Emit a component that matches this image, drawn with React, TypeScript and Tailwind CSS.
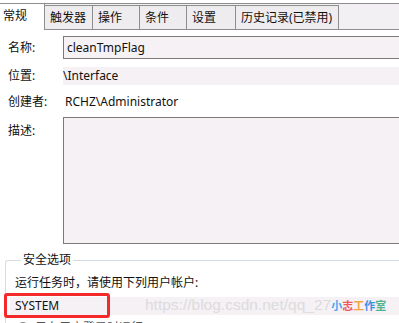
import React from 'react';

const tabs = [
  { label: '触发器', w: 'w-[48px]' },
  { label: '操作', w: 'w-[47px]' },
  { label: '条件', w: 'w-[47px]' },
  { label: '设置', w: 'w-[49px]' },
  { label: '历史记录(已禁用)', w: 'w-[103px]' },
];

export default function App() {
  return (
    <div className="relative w-[399px] h-[323px] overflow-hidden bg-white text-[12px] leading-[18px] text-[#111] font-['Noto_Sans','Noto_Sans_CJK_SC',sans-serif]">
      {/* tab strip */}
      <div className="mt-[3px] flex h-[27px] border-y border-[#8e8e8e] bg-[#f3f0f3]">
        <div className="w-[45px] -mb-px bg-white pl-[3px] pt-[3px] border-r border-[#8e8e8e]">常规</div>
        {tabs.map((t) => (
          <div
            key={t.label}
            className={`${t.w} mt-[1px] flex items-center pl-[5px] border-t border-r border-[#8e8e8e] bg-[#efecef]`}
          >
            {t.label}
          </div>
        ))}
      </div>

      {/* 名称 */}
      <div className="mt-[6px] flex items-center">
        <div className="w-[63px] pl-[8px]">名称:</div>
        <div className="flex-1 h-[23px] flex items-center pl-[3px] border-y border-l border-[#7a7a7a] bg-[#f5f1f5]">
          cleanTmpFlag
        </div>
      </div>

      {/* 位置 */}
      <div className="mt-[8px] flex items-center">
        <div className="w-[63px] pl-[8px]">位置:</div>
        <div className="flex-1 h-[18px] flex items-center bg-[#f5f1f5]">\Interface</div>
      </div>

      {/* 创建者 */}
      <div className="mt-[8px] flex items-center h-[18px]">
        <div className="w-[65px] pl-[8px]">创建者:</div>
        <div>RCHZ\Administrator</div>
      </div>

      {/* 描述 */}
      <div className="mt-[6px] flex">
        <div className="w-[63px] pl-[8px] pt-[5px]">描述:</div>
        <div className="flex-1 h-[127px] border-y border-l border-[#7a7a7a] bg-[#f5f1f5]" />
      </div>

      {/* 安全选项 */}
      <fieldset className="mt-[7px] ml-[5px] border-t border-l border-[#d5dde3] rounded-tl-[3px] pl-[9px]">
        <legend className="ml-[6px] px-[2px]">安全选项</legend>
        <div className="mt-[5px]">运行任务时，请使用下列用户帐户:</div>
        <div className="mt-[5px] -ml-[5px] h-[18px] flex items-center pl-[5px] bg-[#f5f1f5]">SYSTEM</div>
        <div className="mt-[4px] flex items-center gap-[6px] pl-[2px] text-[#555]">
          <span className="w-[12px] h-[12px] rounded-full border border-[#888] bg-[#eee]" />
          <span>只在用户登录时运行</span>
        </div>
      </fieldset>

      {/* red highlight */}
      <div className="absolute left-[4px] top-[293px] w-[106px] h-[25px] border-[3px] border-[#f42a2a] rounded-[3px]" />

      {/* watermark */}
      <div className="absolute left-[145px] top-[295px] flex items-center h-[20px] whitespace-nowrap">
        <span className="text-[15.5px] text-[#dcdcdc] font-['Liberation_Sans',sans-serif]">https://blog.csdn.net/qq_27</span>
        <span className="text-[11px] font-bold font-['Noto_Sans_CJK_SC',sans-serif]">
          <span className="text-[#46a5f3]">小</span>
          <span className="text-[#ef5a5a]">志</span>
          <span className="text-[#f6a540]">工</span>
          <span className="text-[#3c8fe6]">作</span>
          <span className="text-[#4fb48e]">室</span>
        </span>
      </div>
    </div>
  );
}
